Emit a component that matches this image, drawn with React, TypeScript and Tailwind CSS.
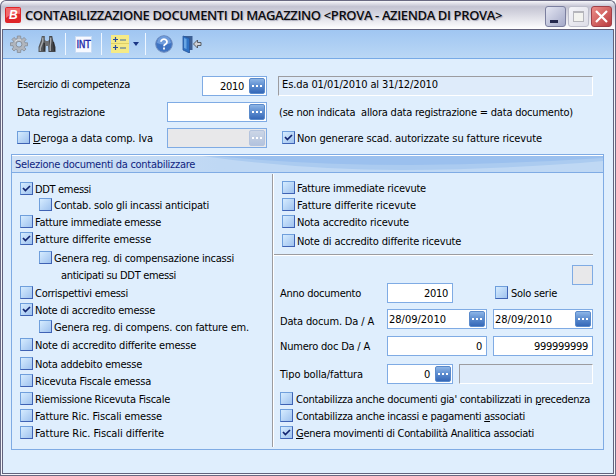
import { useLayoutEffect, useRef, useState } from 'react';
import type { ReactNode } from 'react';

/** Text tracked so that it takes up exactly `w` pixels. */
function Fit({ w, children, className = '' }: { w: number; children: ReactNode; className?: string }) {
  const ref = useRef<HTMLSpanElement>(null);
  const [tracking, setTracking] = useState(0);
  useLayoutEffect(() => {
    const el = ref.current;
    if (!el) return;
    const count = el.textContent?.length ?? 1;
    setTracking((w - el.getBoundingClientRect().width) / count);
  }, [w]);
  return (
    <span ref={ref} className={`inline-block shrink-0 whitespace-pre ${className}`} style={{ letterSpacing: tracking }}>
      {children}
    </span>
  );
}

function Box({ on = false }: { on?: boolean }) {
  return (
    <span className="flex size-[13px] shrink-0 items-center justify-center border border-t-[#6f9fdc] border-l-[#6f9fdc] border-r-[#3f62b4] border-b-[#3f62b4] bg-linear-to-br from-[#d6ecff] to-[#9fc2ee]">
      {on && (
        <svg viewBox="0 0 9 9" className="size-[9px]" fill="none" stroke="#12236f" strokeWidth="1.7">
          <path d="M1 4 L3.4 6.6 L8 2" />
        </svg>
      )}
    </span>
  );
}

function Check({ w, on, children, className = '', gap = 'gap-0.5' }: { w: number; on?: boolean; children: ReactNode; className?: string; gap?: string }) {
  return (
    <div className={`flex h-[13px] shrink-0 ${gap} ${className}`}>
      <Box on={on} />
      <Fit w={w} className="pt-px">{children}</Fit>
    </div>
  );
}

function Dots({ off = false }: { off?: boolean }) {
  return (
    <span
      className={`flex size-4 shrink-0 items-center justify-center gap-[2px] rounded-[2px] border bg-linear-to-b ${
        off ? 'border-[#b4c4de] from-[#ccd6e6] to-[#b3c3de]' : 'border-[#5a8acb] from-[#8db5e6] via-[#5b8bce] to-[#3568b8]'
      }`}
    >
      <i className="size-[2px] bg-white" />
      <i className="size-[2px] bg-white" />
      <i className="size-[2px] bg-white" />
    </span>
  );
}

function Field({ className, children, off = false }: { className: string; children?: ReactNode; off?: boolean }) {
  return (
    <div className={`flex h-5 shrink-0 items-center border border-[#7fabe4] ${off ? 'bg-[#e8e8ea]' : 'bg-white'} ${className}`}>{children}</div>
  );
}

function Sunken({ className, children }: { className: string; children?: ReactNode }) {
  return (
    <div className={`h-5 shrink-0 border border-t-[#9c9ca0] border-l-[#9c9ca0] border-r-white border-b-white bg-[#deebfa] ${className}`}>{children}</div>
  );
}

function Sep({ className = '' }: { className?: string }) {
  return <span className={`h-[22px] w-px shrink-0 bg-[#eef6ff] ${className}`} />;
}

function TitleBar() {
  return (
    <header className="flex h-[29px] shrink-0 items-center rounded-t-[6px] border border-b-0 border-[#696982] bg-linear-to-b from-[#f6f6fa] via-[#c3c3d2] via-20% to-white pl-1">
      <svg viewBox="0 0 16 16" className="size-4 shrink-0">
        <rect width="16" height="16" rx="2" fill="#df2529" />
        <path d="M1 1h14v6Q7 6 1 11z" fill="#f2686a" />
        <text x="4" y="12.3" fill="#fff" fontFamily="Liberation Sans" fontWeight="bold" fontStyle="italic" fontSize="12">B</text>
      </svg>
      <Fit w={477} className="ml-1 font-['Open_Sans',sans-serif] text-[13px] leading-4 font-semibold text-[#0c0c10] [font-stretch:normal] [text-shadow:1px_1px_1px_#a9a9b8]">
        {'CONTABILIZZAZIONE DOCUMENTI DI MAGAZZINO <PROVA - AZIENDA DI PROVA>'}
      </Fit>
      <div className="mt-0.5 mr-[3px] ml-auto flex gap-[2px]">
        <span className="size-[21px] rounded-[3px] border border-[#7b7f9f] bg-linear-to-br from-[#e4e6f2] to-[#a4a9c8] pt-[13px] pl-1">
          <i className="block h-[3px] w-2 bg-[#24284c]" />
        </span>
        <span className="flex size-[21px] items-center justify-center rounded-[3px] border border-[#bcbdca] bg-linear-to-br from-[#f4f4f8] to-[#dedee8]">
          <i className="size-[11px] border border-t-2 border-[#b6b6bc] bg-[#f3f3ef]" />
        </span>
        <span className="flex size-[21px] items-center justify-center rounded-[3px] border border-[#a04048] bg-linear-to-br from-[#eb8d88] to-[#b93a40]">
          <svg viewBox="0 0 13 13" className="size-[13px]" stroke="#fff" strokeWidth="2.2">
            <path d="M1 1 L12 12 M12 1 L1 12" />
          </svg>
        </span>
      </div>
    </header>
  );
}

function Toolbar() {
  return (
    <nav className="flex h-[29px] shrink-0 items-center border-b border-[#78aae6] bg-linear-to-b from-[#a0c6f2] to-[#bad7f5] pl-[7px]">
      <svg viewBox="0 0 18 18" className="size-[18px] shrink-0">
        <path
          d="M7.300 1h3.400v2.500l1.600.7L14 2.400 16 4.500l-1.600 1.800.6 1.500H17.500v3H15l-.6 1.500L16 14.100 14 16l-1.800-1.500-1.500.6V17.500H7.300V15l-1.500-.6L4 16 2 14l1.500-1.800L3 10.700H.500v-3H3l.6-1.500L2 4.500 4 2.400l1.800 1.700 1.500-.6z"
          fill="#b1b6be"
          stroke="#858b95"
          strokeWidth="0.800"
        />
        <path d="M5 6.500Q7 4 11 5" stroke="#dfe2e6" fill="none" />
        <circle cx="9" cy="9.200" r="2.900" fill="#b6d3f2" stroke="#8b9099" />
      </svg>
      <svg viewBox="0 0 18 18" className="ml-[10px] size-[18px] shrink-0">
        <path d="M3.800 1h3v3.500L8 6.500 7.500 17H.500v-5L3 5z" fill="#55585c" />
        <path d="M14.200 1h-3v3.500L10 6.500l.5 10.500h7v-5L15 5z" fill="#45474b" />
        <rect x="7" y="6" width="4" height="5" fill="#6d6f73" />
        <path d="M4.800 2.500v4L2.300 13v3M12.700 2.500v4L12.200 11v5" stroke="#a6a8ab" strokeWidth="1.400" fill="none" />
        <path d="M6.200 8v8M15.500 7l1 9" stroke="#2a2b2e" strokeWidth="1.200" />
      </svg>
      <Sep className="ml-[9px]" />
      <span className="ml-[9px] flex h-[17px] w-[17px] shrink-0 items-center justify-center border border-[#c9dcf4] bg-[#f7f9ff]">
        <Fit w={14} className="text-[10px] leading-[13px] text-[#2029a8] [-webkit-text-stroke:0.3px_#2029a8]">INT</Fit>
      </span>
      <Sep className="ml-[9px]" />
      <svg viewBox="0 0 18 18" className="ml-[9px] size-[18px] shrink-0">
        <rect width="18" height="18" fill="#f5ea86" />
        <path d="M2 4.500h5M4.500 2v5M2 12.500h5M4.500 10v5" stroke="#2b4d9c" strokeWidth="1.200" />
        <path d="M9 5h6M9 13h6" stroke="#416a9c" strokeWidth="1.200" />
        <path d="M0 8.500h18" stroke="#ded067" />
      </svg>
      <svg viewBox="0 0 6 4" className="ml-[4px] h-[4px] w-[6px] shrink-0">
        <path d="M0 0h6L3 4z" fill="#1b3684" />
      </svg>
      <Sep className="ml-[6px]" />
      <svg viewBox="0 0 18 18" className="ml-[9px] size-[18px] shrink-0">
        <circle cx="9" cy="9" r="8.300" fill="#3f73c2" stroke="#6e8cbd" />
        <path d="M2 8a7 7 0 0 1 14 0Q9 11 2 8z" fill="#6f9cdc" />
        <path d="M6 6.800a3 2.700 0 1 1 4.600 2.300Q9 9.900 9 11.200M9 12.600v1.800" fill="none" stroke="#fff" strokeWidth="1.800" />
      </svg>
      <svg viewBox="0 0 20 18" className="ml-[9px] h-[18px] w-5 shrink-0">
        <path d="M2 1h8.500v14H2z" fill="#3c5f94" />
        <path d="M1 1l6.500 2.500V18L1 15z" fill="#2f72c4" stroke="#2a559b" strokeWidth="0.800" />
        <path d="M2 3l2.500 1v10L2 13z" fill="#69a6e4" />
        <path d="M11.500 9l4-4v2.500h3.500v3h-3.500V13z" fill="#d0d2d6" stroke="#4c5058" strokeWidth="0.900" />
      </svg>
    </nav>
  );
}

function HeaderForm() {
  return (
    <section className="flex shrink-0 flex-col gap-1.5 pt-[17px] pl-3.5">
      <div className="flex h-5">
        <div className="w-[185px] shrink-0 pt-[2px]"><Fit w={113}>Esercizio di competenza</Fit></div>
        <Field className="w-[65px] justify-end gap-[5px] pr-px">
          <Fit w={24} className="pt-px">2010</Fit>
          <Dots />
        </Field>
        <Sunken className="ml-[11px] w-[315px] pt-px pl-[3px]">
          <Fit w={156}>Es.da 01/01/2010 al 31/12/2010</Fit>
        </Sunken>
      </div>
      <div className="flex h-5">
        <div className="w-[150px] shrink-0 pt-[4px]"><Fit w={88}>Data registrazione</Fit></div>
        <Field className="w-[100px] justify-end pr-px"><Dots /></Field>
        <Fit w={294} className="ml-3 pt-[4px]">{'(se non indicata  allora data registrazione = data documento)'}</Fit>
      </div>
      <div className="flex h-5">
        <div className="w-[150px] shrink-0 pt-[3px]">
          <Check w={120} gap="gap-[3px]"><u>D</u>eroga a data comp. Iva</Check>
        </div>
        <Field off className="w-[100px] justify-end pr-px"><Dots off /></Field>
        <Check on w={245} className="mt-[3px] ml-[15px]">Non generare scad. autorizzate su fatture ricevute</Check>
      </div>
    </section>
  );
}

function GroupHeader() {
  return (
    <div className="relative h-[18px] shrink-0 border-t border-b border-t-white border-b-[#7fabe4] bg-linear-to-r from-[#cfe1f6] via-[#bfd8f4] via-35% to-[#bfd8f4]">
      <svg viewBox="0 0 591 16" preserveAspectRatio="none" className="absolute inset-0 size-full">
        <path d="M190 0Q290 14 390 14Q500 13 591 5V0z" fill="#abcbf0" />
        <path d="M200 0Q300 9 400 9Q500 8 591 2V0z" fill="#9bc0ee" />
      </svg>
      <Fit w={180} className="relative mt-[2px] ml-[3px] text-[#0f1f80]">Selezione documenti da contabilizzare</Fit>
    </div>
  );
}

function IssuedDocuments() {
  return (
    <div className="flex w-[260px] shrink-0 flex-col pt-[9px] pl-2">
      <Check on w={56}>DDT emessi</Check>
      <Check w={155} className="mt-[3px] ml-[19px]">Contab. solo gli incassi anticipati</Check>
      <Check w={126} className="mt-1">Fatture immediate emesse</Check>
      <Check on w={116} className="mt-1">Fatture differite emesse</Check>
      <Check w={180} className="mt-1.5 ml-[19px]">Genera reg. di compensazione incassi</Check>
      <div className="mt-1 ml-[41px] flex h-[13px] shrink-0 pt-px"><Fit w={115}>anticipati su DDT emessi</Fit></div>
      <Check w={93} className="mt-[5px]">Corrispettivi emessi</Check>
      <Check on w={120} className="mt-1">Note di accredito emesse</Check>
      <Check w={195} className="mt-1 ml-[19px]">Genera reg. di compens. con fatture em.</Check>
      <Check w={161} className="mt-[5px]">Note di accredito differite emesse</Check>
      <Check w={107} className="mt-1.5">Nota addebito emesse</Check>
      <Check w={116} className="mt-1">Ricevuta Fiscale emessa</Check>
      <Check w={135} className="mt-[5px]">Riemissione Ricevuta Fiscale</Check>
      <Check w={127} className="mt-1">Fatture Ric. Fiscali emesse</Check>
      <Check w={129} className="mt-1">Fatture Ric. Fiscali differite</Check>
    </div>
  );
}

function ReceivedDocuments() {
  return (
    <div className="flex grow flex-col">
      <div className="flex h-[81px] shrink-0 flex-col pt-2 pl-2">
        <Check w={129}>Fatture immediate ricevute</Check>
        <Check w={119} className="mt-1">Fatture differite ricevute</Check>
        <Check w={112} className="mt-1">Nota accredito ricevute</Check>
        <Check w={164} className="mt-1.5">Note di accredito differite ricevute</Check>
      </div>
      <div className="mr-[10px] h-[2px] shrink-0 border-t border-b border-t-[#9c9ca0] border-b-white" />
      <div className="mr-[10px] flex h-[27px] shrink-0 justify-end pt-[9px]">
        <Field off className="w-[21px]" />
      </div>
      <div className="flex h-[26px] shrink-0 pl-1.5">
        <div className="w-[107px] shrink-0 pt-1"><Fit w={81}>Anno documento</Fit></div>
        <Field className="w-[66px] justify-end pr-1"><Fit w={24}>2010</Fit></Field>
        <Check w={46} className="mt-[3px] ml-[42px]" gap="gap-[3px]">Solo serie</Check>
      </div>
      <div className="flex h-[27px] shrink-0 gap-1.5 pl-1.5">
        <div className="w-[101px] shrink-0 pt-[6px]"><Fit w={94}>Data docum. Da / A</Fit></div>
        <Field className="w-[100px] justify-between pr-px pl-px"><Fit w={57}>28/09/2010</Fit><Dots /></Field>
        <Field className="w-[100px] justify-between pr-px pl-px"><Fit w={57}>28/09/2010</Fit><Dots /></Field>
      </div>
      <div className="flex h-7 shrink-0 gap-1.5 pl-1.5">
        <div className="w-[101px] shrink-0 pt-1"><Fit w={90}>Numero doc Da / A</Fit></div>
        <Field className="w-[100px] justify-end pr-1"><Fit w={6}>0</Fit></Field>
        <Field className="w-[100px] justify-end pr-1"><Fit w={54}>999999999</Fit></Field>
      </div>
      <div className="flex h-7 shrink-0 gap-1.5 pl-1.5">
        <div className="w-[101px] shrink-0 pt-1"><Fit w={83}>Tipo bolla/fattura</Fit></div>
        <Field className="w-[66px] justify-end gap-[5px] pr-px"><Fit w={6}>0</Fit><Dots /></Field>
        <Sunken className="w-[134px]" />
      </div>
      <div className="flex flex-col gap-1 pl-1.5">
        <Check w={294} gap="gap-[3px]">Contabilizza anche documenti gia' contabilizzati in <u>p</u>recedenza</Check>
        <Check w={229} gap="gap-[3px]">Contabilizza anche incassi e pagamenti <u>a</u>ssociati</Check>
        <Check on w={238} gap="gap-[3px]"><u>G</u>enera movimenti di Contabilità Analitica associati</Check>
      </div>
    </div>
  );
}

export default function App() {
  return (
    <div className="flex h-[476px] w-[616px] flex-col overflow-hidden bg-white font-['DejaVu_Sans_Condensed','DejaVu_Sans',sans-serif] text-[11px] leading-[13px] text-black [font-stretch:condensed]">
      <TitleBar />
      <div className="flex min-h-0 grow border border-t-0 border-[#696982] bg-[#f4f4fa] px-px pb-px">
        <main className="flex w-full flex-col border border-[#62627c] bg-[#dfeefd]">
          <Toolbar />
          <HeaderForm />
          <section className="mt-1.5 ml-2 flex h-[296px] w-[593px] shrink-0 flex-col border border-[#7fabe4]">
            <GroupHeader />
            <div className="flex h-[276px] shrink-0">
              <IssuedDocuments />
              <div className="mt-px mb-0.5 w-[2px] shrink-0 border-r border-l border-r-white border-l-[#9c9ca0]" />
              <ReceivedDocuments />
            </div>
          </section>
        </main>
      </div>
    </div>
  );
}
